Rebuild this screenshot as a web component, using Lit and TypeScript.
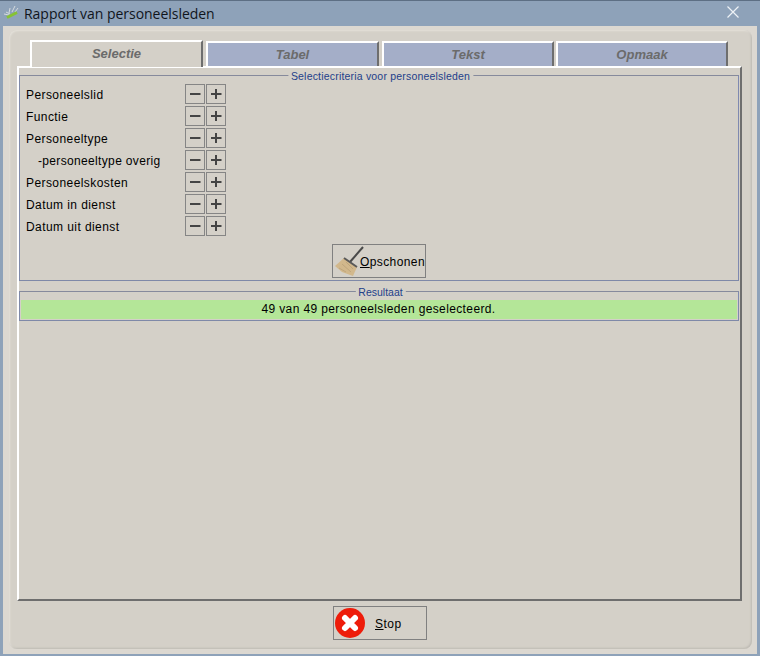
import { LitElement, html, css, svg } from "lit";
import { customElement } from "lit/decorators.js";

const rows: [string, boolean][] = [
  ["Personeelslid", false],
  ["Functie", false],
  ["Personeeltype", false],
  ["-personeeltype overig", true],
  ["Personeelskosten", false],
  ["Datum in dienst", false],
  ["Datum uit dienst", false],
];

@customElement("app-root")
export class AppRoot extends LitElement {
  static styles = css`
    :host { display: block; width: 760px; height: 656px; overflow: hidden; font-family: "Liberation Sans", Arial, sans-serif; }
    * { box-sizing: border-box; }
    .window { width: 760px; height: 656px; background: #8ea2b9; border-top: 1px solid #5d6f84; display: flex; flex-direction: column; padding: 0 3px 2px; }
    .titlebar { height: 25px; flex: none; display: flex; align-items: center; color: #10151c; font: 14px "Open Sans", sans-serif; margin: 0 -3px; padding: 0 21px 0 3px; }
    .titlebar .logo { width: 17px; height: 16px; margin-right: 4px; margin-bottom: 2px; }
    .titlebar .title { flex: 1; letter-spacing: -0.03px; }
    .titlebar .close { width: 12px; height: 12px; margin-bottom: 4px; }
    .frame { flex: 1; background: #dcd8d1; padding: 4px 5px 5px 6px; display: flex; }
    .panel { flex: 1; background: #d4d0c8; border-radius: 8px; box-shadow: inset 1px 1px 2px #e4e1da, inset -1px -1px 2px #bcb9b2; padding: 10px 10px 0 8px; display: flex; flex-direction: column; }
    .tabs { display: flex; padding-left: 13px; height: 27px; flex: none; position: relative; z-index: 1; }
    .tab { font: italic bold 13px "Liberation Sans", sans-serif; color: #6b6b6b; display: flex; align-items: center; justify-content: center; background: #a4aec8; border-top: 2px solid #fff; border-left: 2px solid #fff; border-right: 2px solid #6e6e6e; height: 25px; margin-top: 1px; }
    .tab.sel { background: #d4d0c8; height: 27px; margin-top: 0; width: 173px; margin-right: 3px; padding-bottom: 2px; }
    .tab.a { width: 173px; margin-right: 3px; }
    .tab.b { width: 172px; margin-right: 2px; }
    .tab.c { width: 172px; }
    .pane { height: 535px; flex: none; margin-top: -1px; width: 725px; border: 2px solid; border-color: #fff #6e6e6e #6e6e6e #fff; padding: 7px 0 0 0; display: flex; flex-direction: column; gap: 10px; }
    .fs { border: 1px solid; border-color: #868a9c #7f89b0 #7f89a8 #7f89a8; position: relative; margin: 0; padding: 0; width: 720px; }
    .legend { font: 10.5px "Liberation Sans", sans-serif; color: #23408a; background: #d4d0c8; position: absolute; top: -6px; left: calc(50% + 1.5px); transform: translateX(-50%); padding: 0 3px; line-height: 12px; white-space: nowrap; }
    .legend.long { letter-spacing: 0.19px; }
    .crit { height: 206px; padding: 8px 6px 0; display: flex; flex-direction: column; }
    .row { display: flex; align-items: center; height: 20px; margin-bottom: 2px; font-size: 12px; color: #000; }
    .row .lab { width: 159px; letter-spacing: 0.42px; white-space: nowrap; padding-top: 1px; }
    .row .lab.ind { padding-left: 12px; letter-spacing: 0.34px; }
    .sq { width: 20px; height: 20px; border: 1px solid #858585; margin-right: 1px; display: flex; align-items: center; justify-content: center; }
    .sq svg { width: 12px; height: 12px; }
    .clean-wrap { display: flex; justify-content: center; margin-top: 6px; }
    .btn { display: flex; align-items: center; border: 1px solid #808080; width: 94px; height: 34px; font-size: 12px; letter-spacing: 0.4px; color: #000; }
    .btn svg { flex: none; overflow: visible; }
    .btn.clean span { padding-top: 1px; }
    .res { height: 30px; padding: 8px 1px 0 1px; }
    .ok { background: #b4e698; height: 19px; font-size: 12px; letter-spacing: 0.375px; display: flex; align-items: center; justify-content: center; color: #000; padding-bottom: 1px; padding-right: 1px; }
    .foot { display: flex; justify-content: center; padding: 5px 0 0 1px; height: 40px; flex: none; }
    .stop span { margin-left: 9px; letter-spacing: 0.5px; padding-top: 1px; }
  `;

  private sq(plus: boolean) {
    return html`<div class="sq"><svg viewBox="0 0 12 12"><rect x="1" y="5" width="10.5" height="2" fill="#444"></rect>${plus ? svg`<rect x="5" y="1" width="2" height="10" fill="#444"></rect>` : ""}</svg></div>`;
  }

  render() {
    return html`<div class="window">
      <div class="titlebar">
        <svg class="logo" viewBox="0 0 17 16"><path d="M9 7 L12 1 M12 7 L15 3 M6 8 L7 3 M3 7 L7 9 M1 9 L6 10" stroke="#d5dade" stroke-width="1" fill="none"></path><path d="M4 12.5 L14 7.5" stroke="#86c234" stroke-width="3"></path></svg>
        <span class="title">Rapport van personeelsleden</span>
        <svg class="close" viewBox="0 0 12 12"><path d="M0.5 0.5 L11.5 11.5 M11.5 0.5 L0.5 11.5" stroke="#eef2f6" stroke-width="1.2" fill="none"></path></svg>
      </div>
      <div class="frame"><div class="panel">
        <div class="tabs">
          <div class="tab sel">Selectie</div>
          <div class="tab a">Tabel</div>
          <div class="tab b">Tekst</div>
          <div class="tab c">Opmaak</div>
        </div>
        <div class="pane">
          <div class="fs crit">
            <div class="legend long">Selectiecriteria voor personeelsleden</div>
            ${rows.map(([l, ind]) => html`<div class="row"><div class="lab ${ind ? "ind" : ""}">${l}</div>${this.sq(false)}${this.sq(true)}</div>`)}
            <div class="clean-wrap"><div class="btn clean">
              <svg width="27" height="32" viewBox="0 0 27 32"><path d="M30 2 L17 17" stroke="#4a4a4a" stroke-width="2"></path><path d="M2 21 L11 13 L24 22 L20 31 L9 27 Z" fill="#d2b88c"></path><path d="M6 23 L13 27 M9 19 L18 27 M13 17 L20 24" stroke="#b89e76" stroke-width="0.7"></path><path d="M11 13 L24 22" stroke="#5a5a5a" stroke-width="2"></path></svg>
              <span><u>O</u>pschonen</span>
            </div></div>
          </div>
          <div class="fs res">
            <div class="legend">Resultaat</div>
            <div class="ok">49 van 49 personeelsleden geselecteerd.</div>
          </div>
        </div>
        <div class="foot"><div class="btn stop">
          <svg width="32" height="32" viewBox="0 0 32 32"><circle cx="16" cy="16" r="15" fill="#ee1c0a"></circle><path d="M11 11 L21 21 M21 11 L11 21" stroke="#fff" stroke-width="6" stroke-linecap="round"></path></svg>
          <span><u>S</u>top</span>
        </div></div>
      </div></div>
    </div>`;
  }
}
